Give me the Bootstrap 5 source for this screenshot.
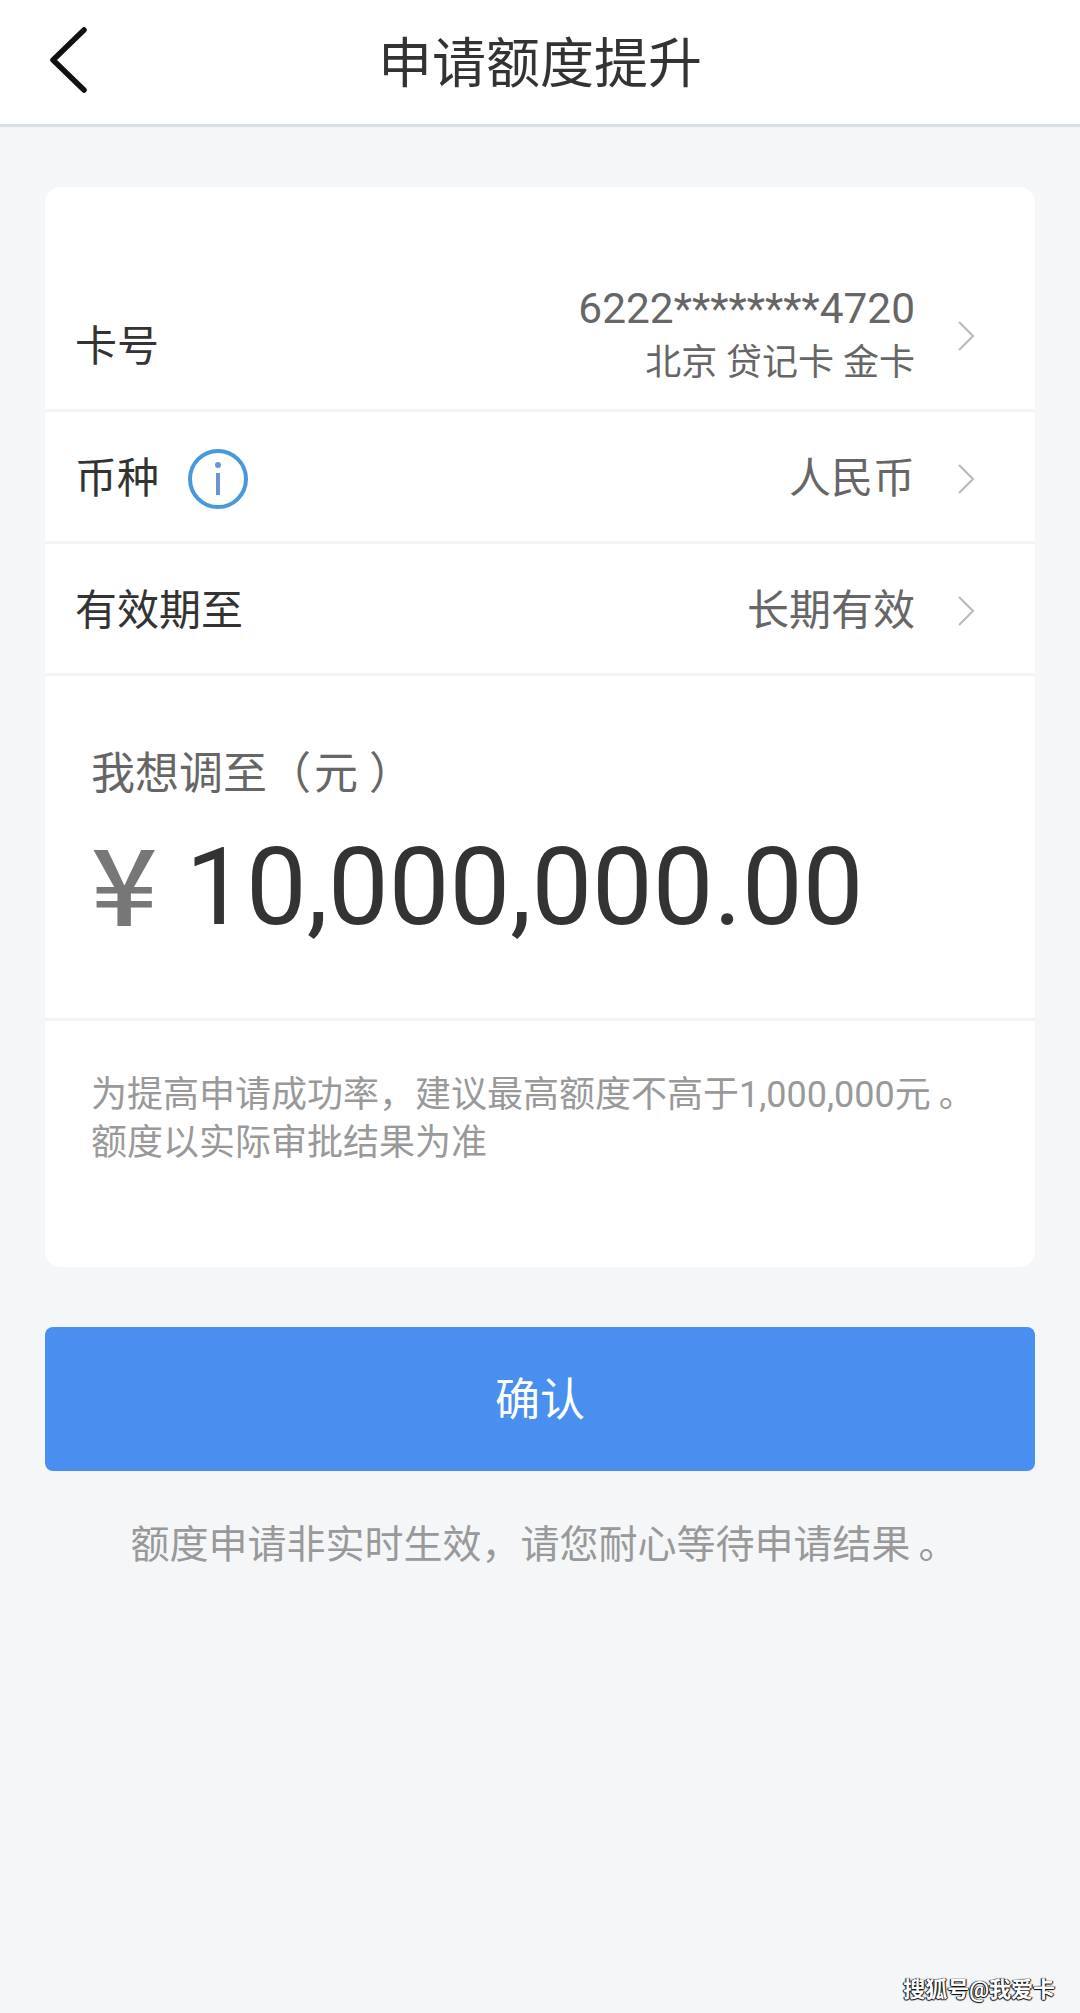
<!DOCTYPE html>
<html lang="zh-CN">
<head>
    <meta charset="UTF-8">
    <meta name="viewport" content="width=device-width, initial-scale=1.0">
    <title>申请额度提升</title>
    <link href="https://cdn.jsdelivr.net/npm/bootstrap@5.3.3/dist/css/bootstrap.min.css" rel="stylesheet" crossorigin="anonymous">
    <style>
        body {
            background: #f4f6f8;
            font-family: Roboto, "Noto Sans CJK SC", sans-serif;
            height: 2013px;
            overflow: hidden;
            position: relative;
        }
        .top-bar {
            display: grid;
            grid-template-columns: 1fr auto 1fr;
            align-items: center;
            height: 127px;
            background: #fff;
            border-bottom: 3px solid #d9dee4;
            padding: 0 48px;
        }
        .back-arrow { margin-bottom: 4px; }
        .top-title { font-size: 54px; color: #333; line-height: 1; padding-top: 6px; }
        .apply-card {
            margin: 60px 45px 0;
            background: #fff;
            border: 0;
            border-radius: 16px;
            overflow: hidden;
        }
        .info-row {
            padding: 0 60px 0 30px;
            border-bottom: 3px solid #f3f4f6;
            font-size: 42px;
            color: #333;
            line-height: 1.2;
        }
        .row-card { height: 225px; padding-top: 76px; }
        .row-card .row-label { margin-top: 22px; }
        .row-currency { height: 132px; padding-top: 5px; }
        .row-expire { height: 132px; padding-top: 6px; }
        .row-right { color: #666; }
        .card-no { font-size: 42.4px; line-height: 54px; }
        .card-kind { font-size: 36px; line-height: 54px; }
        .row-arrow { margin-left: 42px; display: block; }
        .info-mark { margin-left: 29px; }
        .amount-box {
            height: 345px;
            padding: 70px 46px 0;
            border-bottom: 3px solid #f3f4f6;
        }
        .amount-label { font-size: 44px; color: #666; line-height: 56px; }
        .unit-char { margin: 0 11px 0 3px; }
        .amount-line { margin-top: 26px; height: 118px; line-height: 118px; color: #333; }
        .amount-yen {
            font-family: "Noto Sans CJK SC", sans-serif;
            font-size: 106px;
            font-weight: 500;
            color: #777;
            margin: 0 34px 14px 0;
            transform: scaleX(1.1);
            transform-origin: left center;
        }
        .amount-num { font-size: 108px; }
        .note-box {
            height: 246px;
            padding: 50px 46px 0;
            font-size: 36px;
            line-height: 48px;
            color: #999;
        }
        .end-dot { margin: 0 -8px 0 8px; }
        .confirm-btn {
            display: block;
            width: 990px;
            height: 144px;
            margin: 60px 45px 0;
            padding-top: 10px;
            background: #488ff0;
            border: 0;
            border-radius: 8px;
            color: #fff;
            font-size: 45px;
        }
        .bottom-hint {
            margin-top: 49px;
            text-align: center;
            font-size: 39px;
            line-height: 50px;
            color: #999;
        }
        .watermark {
            position: absolute;
            right: 25px;
            top: 1976px;
            font-size: 22px;
            line-height: 28px;
            font-weight: 700;
            color: #fff;
            text-shadow: -1px 0 1px #000, 1px 0 1px #000, 0 1px 1px #000;
        }
    </style>
</head>
<body>
    <div class="top-bar">
        <svg class="back-arrow" width="40" height="66" viewBox="0 0 40 66" fill="none">
            <path d="M36 3 L5 33 L36 63" stroke="#111" stroke-width="5.5" stroke-linecap="round" stroke-linejoin="round"/>
        </svg>
        <div class="top-title">申请额度提升</div>
        <div></div>
    </div>

    <div class="card apply-card">
        <div class="info-row row-card d-flex align-items-center justify-content-between">
            <div class="row-label">卡号</div>
            <div class="d-flex align-items-center">
                <div class="row-right text-end">
                    <div class="card-no">6222********4720</div>
                    <div class="card-kind">北京 贷记卡 金卡</div>
                </div>
                <svg class="row-arrow" width="18" height="32" viewBox="0 0 18 32" fill="none"><path d="M2 2 L16 16 L2 30" stroke="#bbb" stroke-width="2.2"/></svg>
            </div>
        </div>
        <div class="info-row row-currency d-flex align-items-center justify-content-between">
            <div class="d-flex align-items-center">
                <span>币种</span>
                <svg class="info-mark" width="60" height="60" viewBox="0 0 60 60" fill="none">
                    <circle cx="30" cy="30" r="28" stroke="#4a98dc" stroke-width="4"/>
                    <circle cx="30" cy="16" r="3" fill="#6b94d8"/>
                    <path d="M30 24 V46" stroke="#6b94d8" stroke-width="4"/>
                </svg>
            </div>
            <div class="d-flex align-items-center">
                <div class="row-right">人民币</div>
                <svg class="row-arrow" width="18" height="32" viewBox="0 0 18 32" fill="none"><path d="M2 2 L16 16 L2 30" stroke="#bbb" stroke-width="2.2"/></svg>
            </div>
        </div>
        <div class="info-row row-expire d-flex align-items-center justify-content-between">
            <div>有效期至</div>
            <div class="d-flex align-items-center">
                <div class="row-right">长期有效</div>
                <svg class="row-arrow" width="18" height="32" viewBox="0 0 18 32" fill="none"><path d="M2 2 L16 16 L2 30" stroke="#bbb" stroke-width="2.2"/></svg>
            </div>
        </div>
        <div class="amount-box">
            <div class="amount-label">我想调至（<span class="unit-char">元</span>）</div>
            <div class="amount-line d-flex align-items-center">
                <span class="amount-yen">¥</span>
                <span class="amount-num">10,000,000.00</span>
            </div>
        </div>
        <div class="note-box">
            为提高申请成功率，建议最高额度不高于1,000,000元<span class="end-dot">。</span><br>额度以实际审批结果为准
        </div>
    </div>

    <button type="button" class="btn confirm-btn">确认</button>
    <div class="bottom-hint">额度申请非实时生效，请您耐心等待申请结果<span class="end-dot">。</span></div>
    <div class="watermark">搜狐号@我爱卡</div>
</body>
</html>
